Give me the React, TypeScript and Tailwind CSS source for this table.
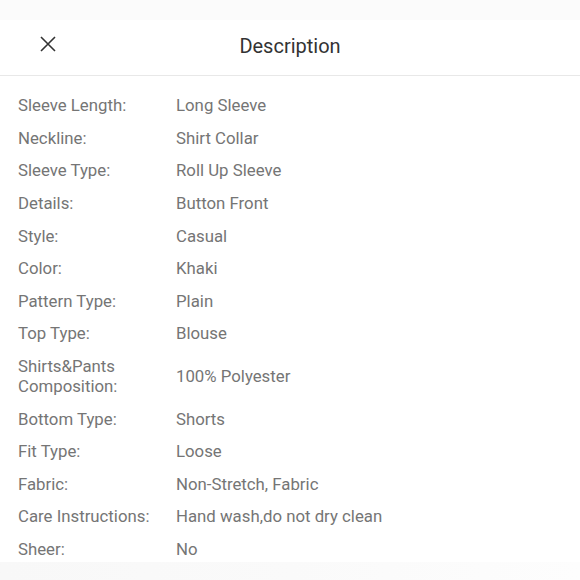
import React from "react";

const rows: [string, string][] = [
  ["Sleeve Length:", "Long Sleeve"],
  ["Neckline:", "Shirt Collar"],
  ["Sleeve Type:", "Roll Up Sleeve"],
  ["Details:", "Button Front"],
  ["Style:", "Casual"],
  ["Color:", "Khaki"],
  ["Pattern Type:", "Plain"],
  ["Top Type:", "Blouse"],
  ["Shirts&Pants Composition:", "100% Polyester"],
  ["Bottom Type:", "Shorts"],
  ["Fit Type:", "Loose"],
  ["Fabric:", "Non-Stretch, Fabric"],
  ["Care Instructions:", "Hand wash,do not dry clean"],
  ["Sheer:", "No"],
];

export default function App() {
  return (
    <div
      className="w-[580px] h-[580px] overflow-hidden bg-white flex flex-col"
      style={{ fontFamily: "Roboto, 'Liberation Sans', sans-serif" }}
    >
      <div className="h-[20px] shrink-0 bg-[#fbfbfb]" />
      <div className="h-[56px] shrink-0 border-b border-[#e8e8e8] relative flex items-center justify-center">
        <svg
          className="absolute left-[40px] top-[16px]"
          width="16"
          height="16"
          viewBox="0 0 16 16"
          fill="none"
          stroke="#333"
          strokeWidth="1.6"
        >
          <path d="M1 1L15 15M15 1L1 15" />
        </svg>
        <span className="text-[20px] text-[#333] leading-none -mt-[4px]">Description</span>
      </div>
      <div className="flex-1 min-h-0 overflow-hidden flex flex-col pt-[13px] px-[18px] text-[16.8px] text-[#757575]">
        {rows.map(([k, v]) => (
          <div key={k} className="flex items-center shrink-0 py-[6.3px] leading-[20px]">
            <div className="w-[158px] shrink-0 pr-[20px]">{k}</div>
            <div>{v}</div>
          </div>
        ))}
      </div>
      <div className="h-[18px] shrink-0 bg-gradient-to-r from-[#f8f8f8] via-[#fafafa] to-[#fdfdfd]" />
    </div>
  );
}
